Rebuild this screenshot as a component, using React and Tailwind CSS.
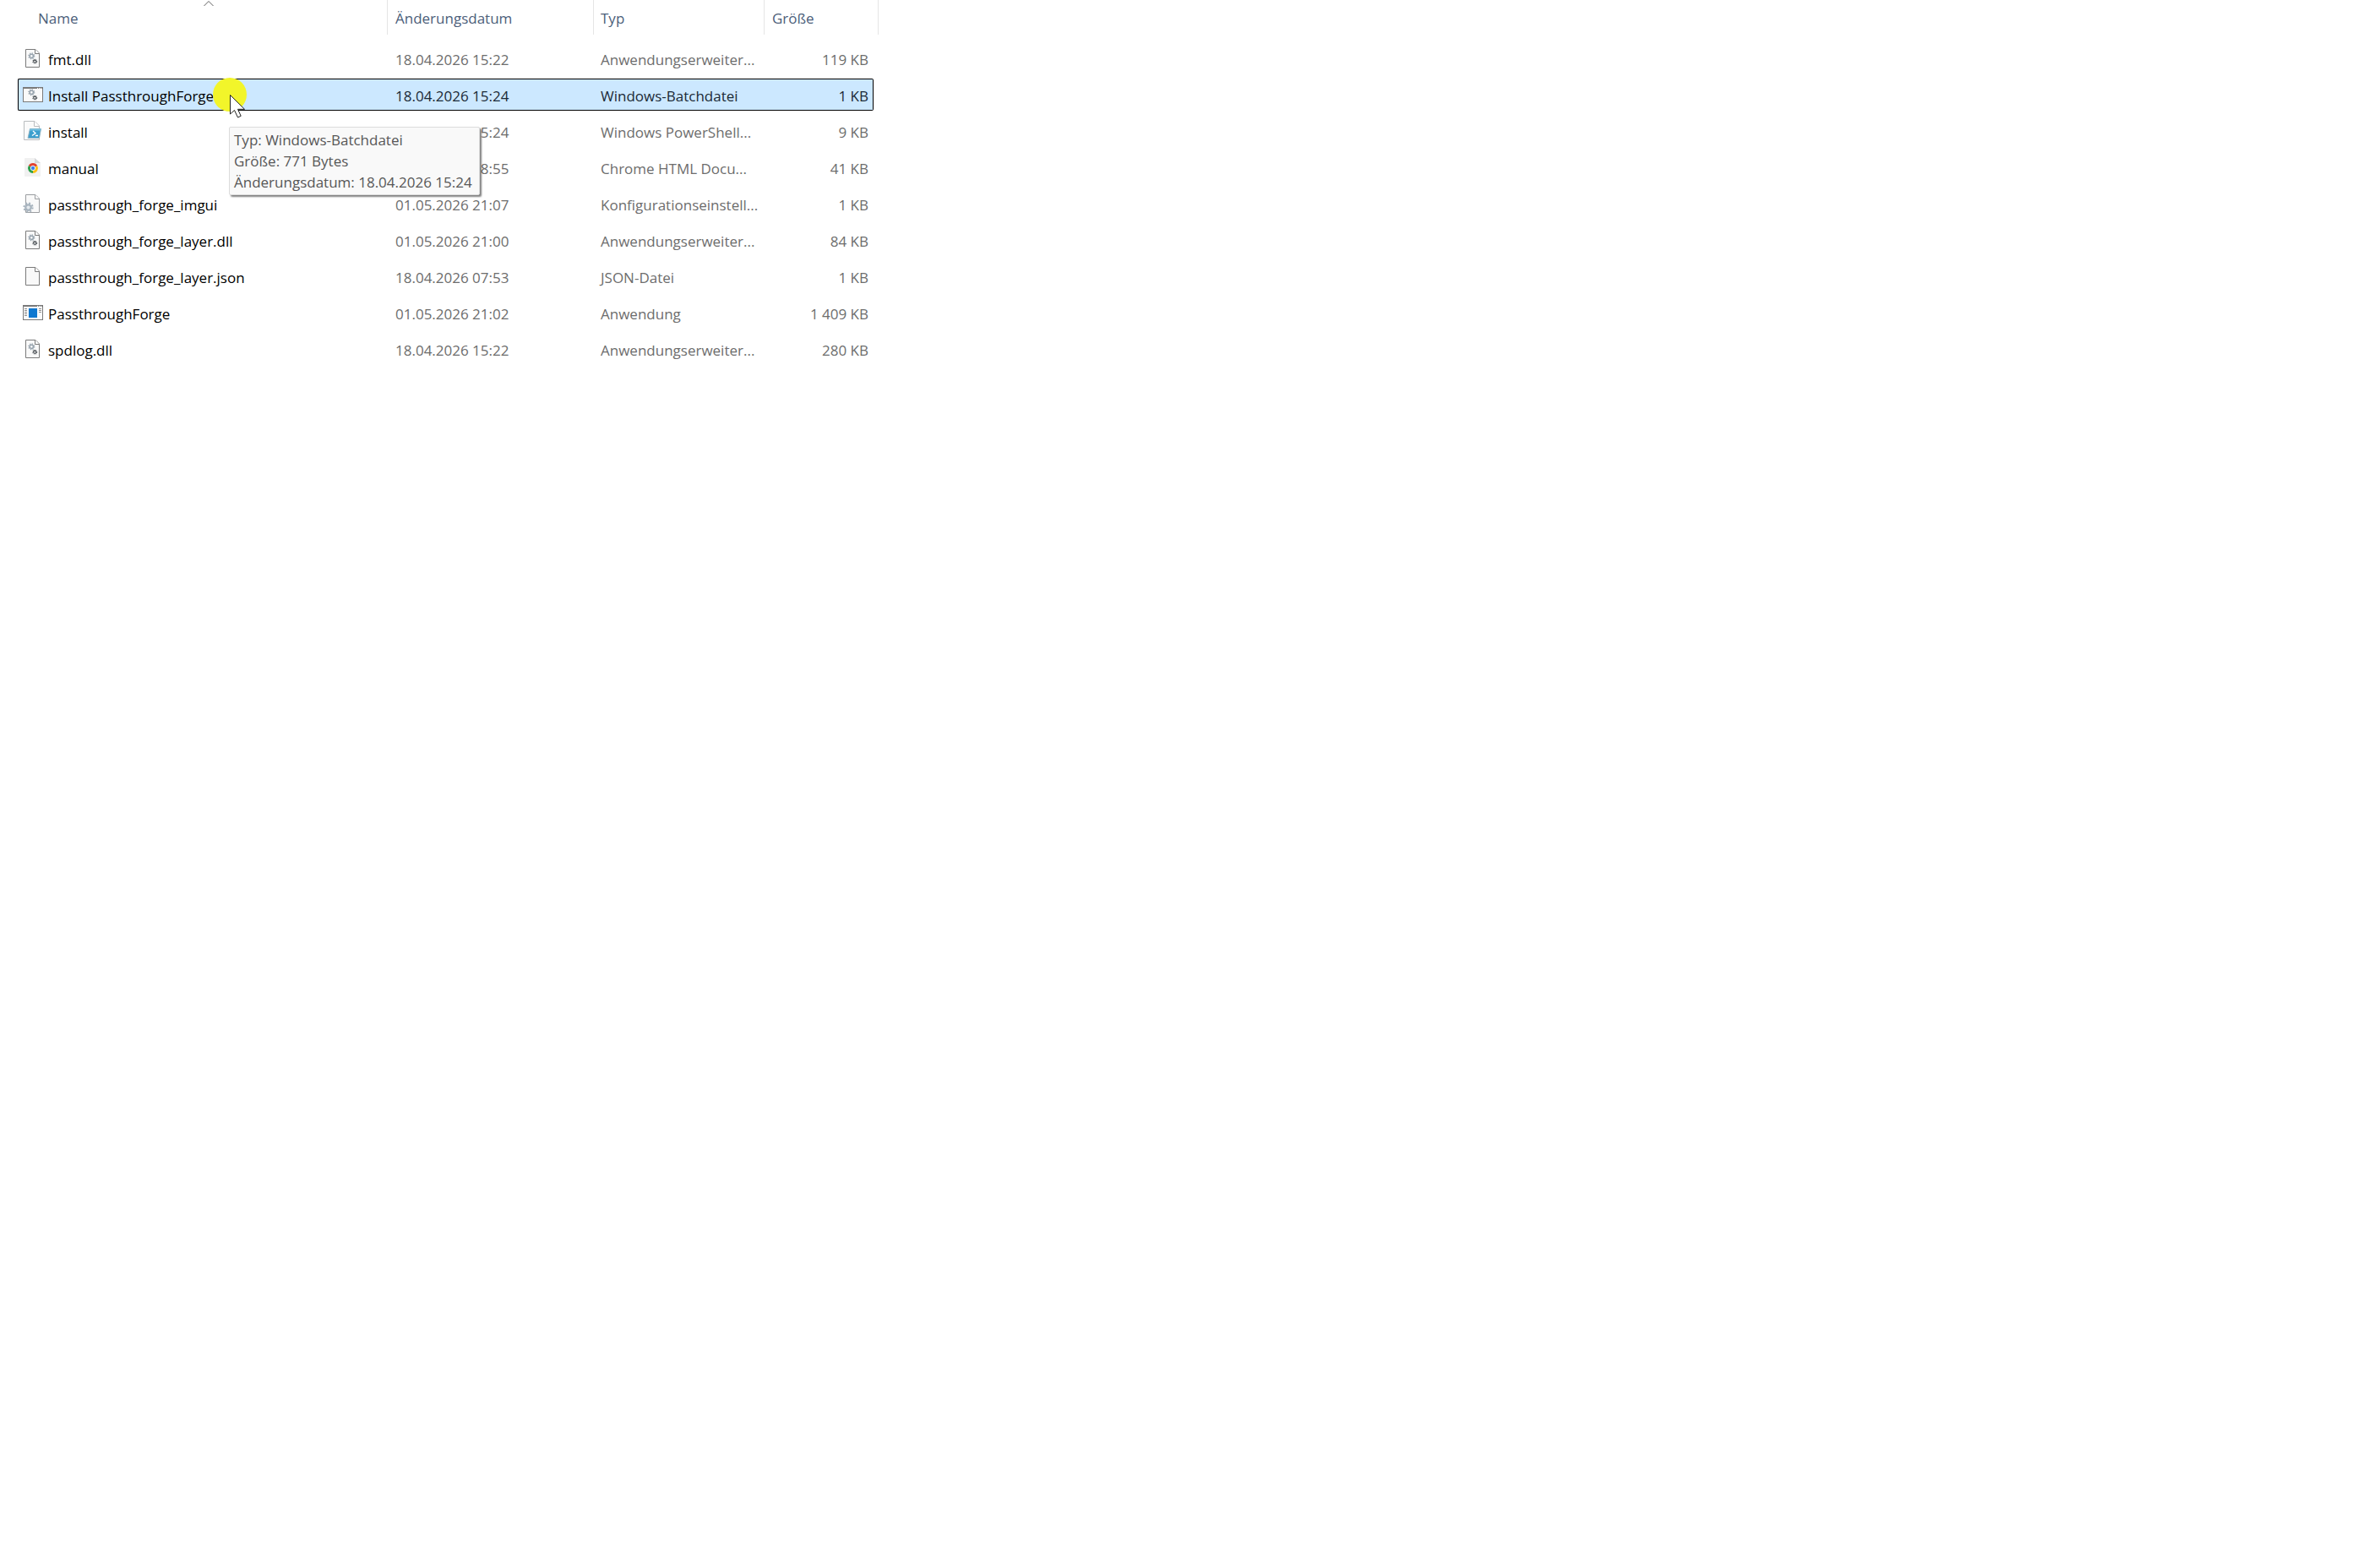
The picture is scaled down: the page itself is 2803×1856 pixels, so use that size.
import React from 'react';

const files = [
    { name: 'fmt.dll', date: '18.04.2026 15:22', type: 'Anwendungserweiter...', size: '119 KB', icon: DllIcon },
    { name: 'Install PassthroughForge', date: '18.04.2026 15:24', type: 'Windows-Batchdatei', size: '1 KB', icon: BatchIcon, selected: true },
    { name: 'install', date: '18.04.2026 15:24', type: 'Windows PowerShell...', size: '9 KB', icon: PowerShellIcon },
    { name: 'manual', date: '18.04.2026 08:55', type: 'Chrome HTML Docu...', size: '41 KB', icon: ChromeIcon },
    { name: 'passthrough_forge_imgui', date: '01.05.2026 21:07', type: 'Konfigurationseinstell...', size: '1 KB', icon: ConfigIcon },
    { name: 'passthrough_forge_layer.dll', date: '01.05.2026 21:00', type: 'Anwendungserweiter...', size: '84 KB', icon: DllIcon },
    { name: 'passthrough_forge_layer.json', date: '18.04.2026 07:53', type: 'JSON-Datei', size: '1 KB', icon: FileIcon },
    { name: 'PassthroughForge', date: '01.05.2026 21:02', type: 'Anwendung', size: '1 409 KB', icon: AppIcon },
    { name: 'spdlog.dll', date: '18.04.2026 15:22', type: 'Anwendungserweiter...', size: '280 KB', icon: DllIcon },
];

function Icon({ children }) {
    return (
        <svg className="size-6 shrink-0" viewBox="0 0 24 24" fill="none" aria-hidden="true">
            {children}
        </svg>
    );
}

function Page({ stroke = '#7a7a7a' }) {
    return (
        <>
            <path d="M3.5 1.5H15L19.5 6V22.5H3.5Z" fill="#f9f9f9" stroke={stroke} />
            <path d="M14.5 1.5V6.5H19.5" fill="#fff" stroke={stroke} />
        </>
    );
}

// a ring with a dashed ring around it for the teeth
function Gear({ x, y, r, color, hole = '#f9f9f9' }) {
    const tooth = (2 * Math.PI * r) / 16;
    return (
        <>
            <circle cx={x} cy={y} r={r} stroke={color} strokeWidth={r * 0.45} strokeDasharray={tooth} />
            <circle cx={x} cy={y} r={r * 0.65} fill={hole} stroke={color} strokeWidth={r * 0.45} />
        </>
    );
}

function Gears() {
    return (
        <>
            <Gear x={10.3} y={9.3} r={3.3} color="#98a4ae" />
            <Gear x={14.3} y={15.7} r={2.4} color="#454b50" />
        </>
    );
}

function FileIcon() {
    return <Icon><Page /></Icon>;
}

function DllIcon() {
    return <Icon><Page /><Gears /></Icon>;
}

function Frame() {
    return (
        <>
            <rect x="0.5" y="3.5" width="23" height="17" fill="#f9f9f9" stroke="#7a7a7a" />
            <path d="M0 4H24" stroke="#7a7a7a" strokeWidth="2" />
            <path d="M17 4.5H22.5" stroke="#fff" strokeDasharray="1 1" />
        </>
    );
}

function BatchIcon() {
    return <Icon><Frame /><Gears /></Icon>;
}

function AppIcon() {
    return (
        <Icon>
            <Frame />
            <path d="M2 7.5H5M2 9.5H5M2 11.5H5M2 13.5H5M2 15.5H5M19 7.5H22M19 9.5H22M19 11.5H22" stroke="#8f8f8f" />
            <rect x="7" y="7" width="10" height="11" fill="#0f78d0" />
        </Icon>
    );
}

function PowerShellIcon() {
    return (
        <Icon>
            <path d="M1.5 0.5H14L19.5 6V22.5H1.5Z" fill="#fafafa" stroke="#b9bcbe" />
            <path d="M13.5 0.5V6.5H19.5" fill="#fff" stroke="#b9bcbe" />
            <path d="M8.5 9.5H21.5L19.5 20.5H6Z" fill="#3b9fce" stroke="#8fb4c4" />
            <path d="M8.5 9.5H21.5L21.2 11.5H8Z" fill="#74bfe0" />
            <path d="M12 12L15 14.7L11 17.5M15 17.5H18" stroke="#fff" strokeWidth="1.3" />
        </Icon>
    );
}

function ChromeIcon() {
    return (
        <Icon>
            <path d="M3 1H14L21 7V22Q21 23 20 23H3Q2 23 2 22V2Q2 1 3 1Z" fill="#f1f1f1" />
            <path d="M14 1L21 7H14Z" fill="#d5d7d9" />
            <path d="M12 13L6.8 10A6 6 0 0 1 17.2 10Z" fill="#e2412f" />
            <path d="M12 13L17.2 10A6 6 0 0 1 12 19Z" fill="#fbc116" />
            <path d="M12 13L12 19A6 6 0 0 1 6.8 10Z" fill="#2da04c" />
            <circle cx="12" cy="13" r="2.7" fill="#3f7fe8" stroke="#fff" strokeWidth="0.9" />
        </Icon>
    );
}

function ConfigIcon() {
    return (
        <Icon>
            <Page stroke="#9a9da0" />
            <Gear x={6.5} y={16.5} r={5} color="#a9b5bf" hole="#e4e9ed" />
        </Icon>
    );
}

function HeaderCell({ children, sorted, className }) {
    return (
        <th className="h-[47px] p-0 align-top font-normal" aria-sort={sorted ? 'ascending' : undefined}>
            <button type="button" className={`relative flex h-[41px] w-full items-center border-r border-[#e5e5e5] pt-0.5 text-[#4c607a] ${className}`}>
                {children}
                {sorted && (
                    <svg className="absolute top-0 left-[220px] h-2 w-3" viewBox="0 0 12 8" fill="none" aria-hidden="true">
                        <path d="M0.5 7L6 1.5L11.5 7" stroke="#5e5e5e" />
                    </svg>
                )}
            </button>
        </th>
    );
}

function FileRow({ file }) {
    const FileTypeIcon = file.icon;
    const line = file.selected ? 'border-black bg-[#cce8ff]' : 'border-transparent';
    const text = file.selected ? 'text-[#1b2a36]' : 'text-[#6d6d6d]';

    return (
        <tr className={text} aria-selected={Boolean(file.selected)}>
            <td className="h-[43px] p-0">
                <div className={`flex h-[38px] items-center gap-1.5 rounded-l-xs border-y border-l pl-[5px] text-black ${line}`}>
                    <FileTypeIcon />
                    <span className="pt-1">{file.name}</span>
                </div>
            </td>
            <td className="p-0">
                <div className={`flex h-[38px] items-center border-y pt-1 pl-[9px] ${line}`}>{file.date}</div>
            </td>
            <td className="p-0">
                <div className={`flex h-[38px] items-center border-y pt-1 pl-2 ${line}`}>{file.type}</div>
            </td>
            <td className="p-0 pr-1.5">
                <div className={`flex h-[38px] items-center justify-end rounded-r-xs border-y border-r pt-1 pr-[5px] ${line}`}>{file.size}</div>
            </td>
        </tr>
    );
}

function Tooltip() {
    return (
        <div role="tooltip" className="absolute top-[150px] left-[271px] rounded-xs border border-[#dcdcdc] bg-[#f9f9f9] py-0.5 pr-2 pl-[5px] leading-[25px] whitespace-nowrap text-[#575757] shadow-[2px_2px_2px_rgba(0,0,0,0.5)]">
            <p>Typ: Windows-Batchdatei</p>
            <p>Größe: 771 Bytes</p>
            <p>Änderungsdatum: 18.04.2026 15:24</p>
        </div>
    );
}

function Pointer() {
    return (
        <div className="pointer-events-none absolute top-[92px] left-[252px] size-10 rounded-full bg-[#f2f52a]">
            <svg className="absolute top-5 left-5 h-7 w-5" viewBox="0 0 20 28" aria-hidden="true">
                <path d="M0.5 0.5V23L5.5 18.5L9.5 27L13.2 25.3L9.5 17.3H17.5Z" fill="#fff" stroke="#222" />
            </svg>
        </div>
    );
}

export default function App() {
    return (
        <main className="relative min-h-screen overflow-hidden bg-white pl-[21px] font-['Open_Sans','Noto_Sans',sans-serif] text-[17px] leading-6">
            <table className="w-[1019px] table-fixed border-collapse text-left whitespace-nowrap">
                <colgroup>
                    <col className="w-[438px]" />
                    <col className="w-[244px]" />
                    <col className="w-[202px]" />
                    <col className="w-[135px]" />
                </colgroup>
                <thead>
                    <tr>
                        <HeaderCell sorted className="pl-6">Name</HeaderCell>
                        <HeaderCell className="pl-[9px]">Änderungsdatum</HeaderCell>
                        <HeaderCell className="pl-2">Typ</HeaderCell>
                        <HeaderCell className="pl-[9px]">Größe</HeaderCell>
                    </tr>
                </thead>
                <tbody>
                    {files.map((file) => (
                        <FileRow key={file.name} file={file} />
                    ))}
                </tbody>
            </table>
            <Tooltip />
            <Pointer />
        </main>
    );
}
